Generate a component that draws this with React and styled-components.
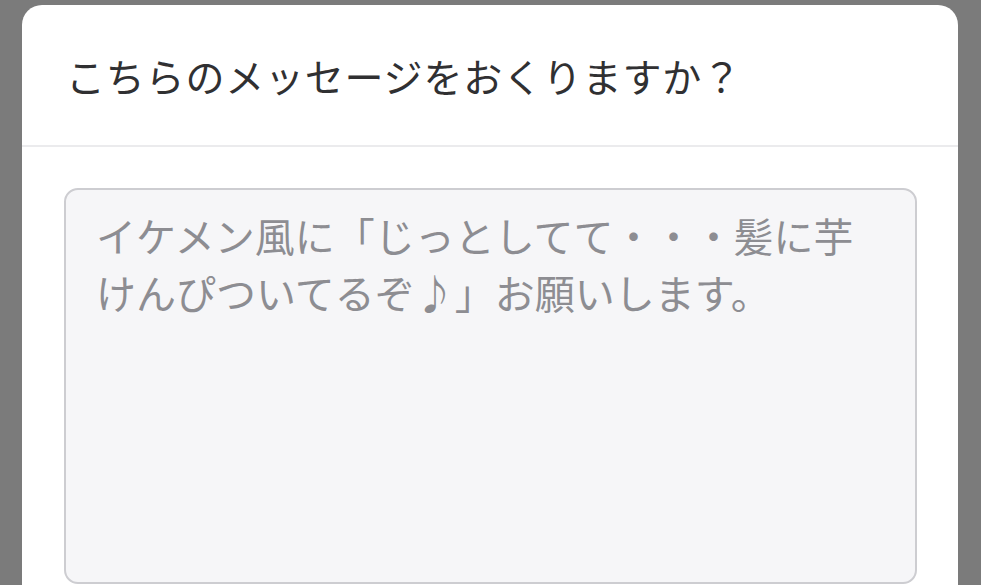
import React from 'react';
import styled, { createGlobalStyle } from 'styled-components';

const GlobalStyle = createGlobalStyle`
  html, body {
    margin: 0;
    padding: 0;
    height: 100%;
    overflow: hidden;
    background-color: #7b7b7b;
  }
  #root {
    height: 100%;
  }
`;

const Backdrop = styled.div`
  height: 100%;
  box-sizing: border-box;
  padding: 5px 23px 0 22px;
  background-color: #7b7b7b;
  font-family: "Noto Sans CJK JP", "Noto Sans", sans-serif;
`;

const Modal = styled.div`
  height: 100%;
  background-color: #ffffff;
  border-radius: 20px 20px 0 0;
  display: flex;
  flex-direction: column;
  overflow: hidden;
`;

const Header = styled.div`
  height: 140px;
  display: flex;
  align-items: center;
  padding: 0 44px;
  border-bottom: 2px solid #ebebed;
  flex-shrink: 0;
`;

const Title = styled.h2`
  margin: 0;
  font-size: 39px;
  font-weight: 400;
  color: #303032;
  letter-spacing: 0.8px;
`;

const Body = styled.div`
  padding: 41px 41px 0 42px;
`;

const MessageInput = styled.textarea`
  display: block;
  width: 100%;
  height: 396px;
  box-sizing: border-box;
  padding: 17px 30px;
  border: 2px solid #cdcdd1;
  border-radius: 14px;
  background-color: #f6f6f8;
  font-family: "Noto Sans CJK JP", "Noto Sans", sans-serif;
  font-size: 40px;
  line-height: 57px;
  color: #2c2c2e;
  resize: none;
  outline: none;

  &::placeholder {
    color: #8d8d92;
  }
`;

const App = () => {
  return (
    <>
      <GlobalStyle />
      <Backdrop>
        <Modal>
          <Header>
            <Title>こちらのメッセージをおくりますか？</Title>
          </Header>
          <Body>
            <MessageInput placeholder="イケメン風に「じっとしてて・・・髪に芋けんぴついてるぞ♪」お願いします。" />
          </Body>
        </Modal>
      </Backdrop>
    </>
  );
};

export default App;
